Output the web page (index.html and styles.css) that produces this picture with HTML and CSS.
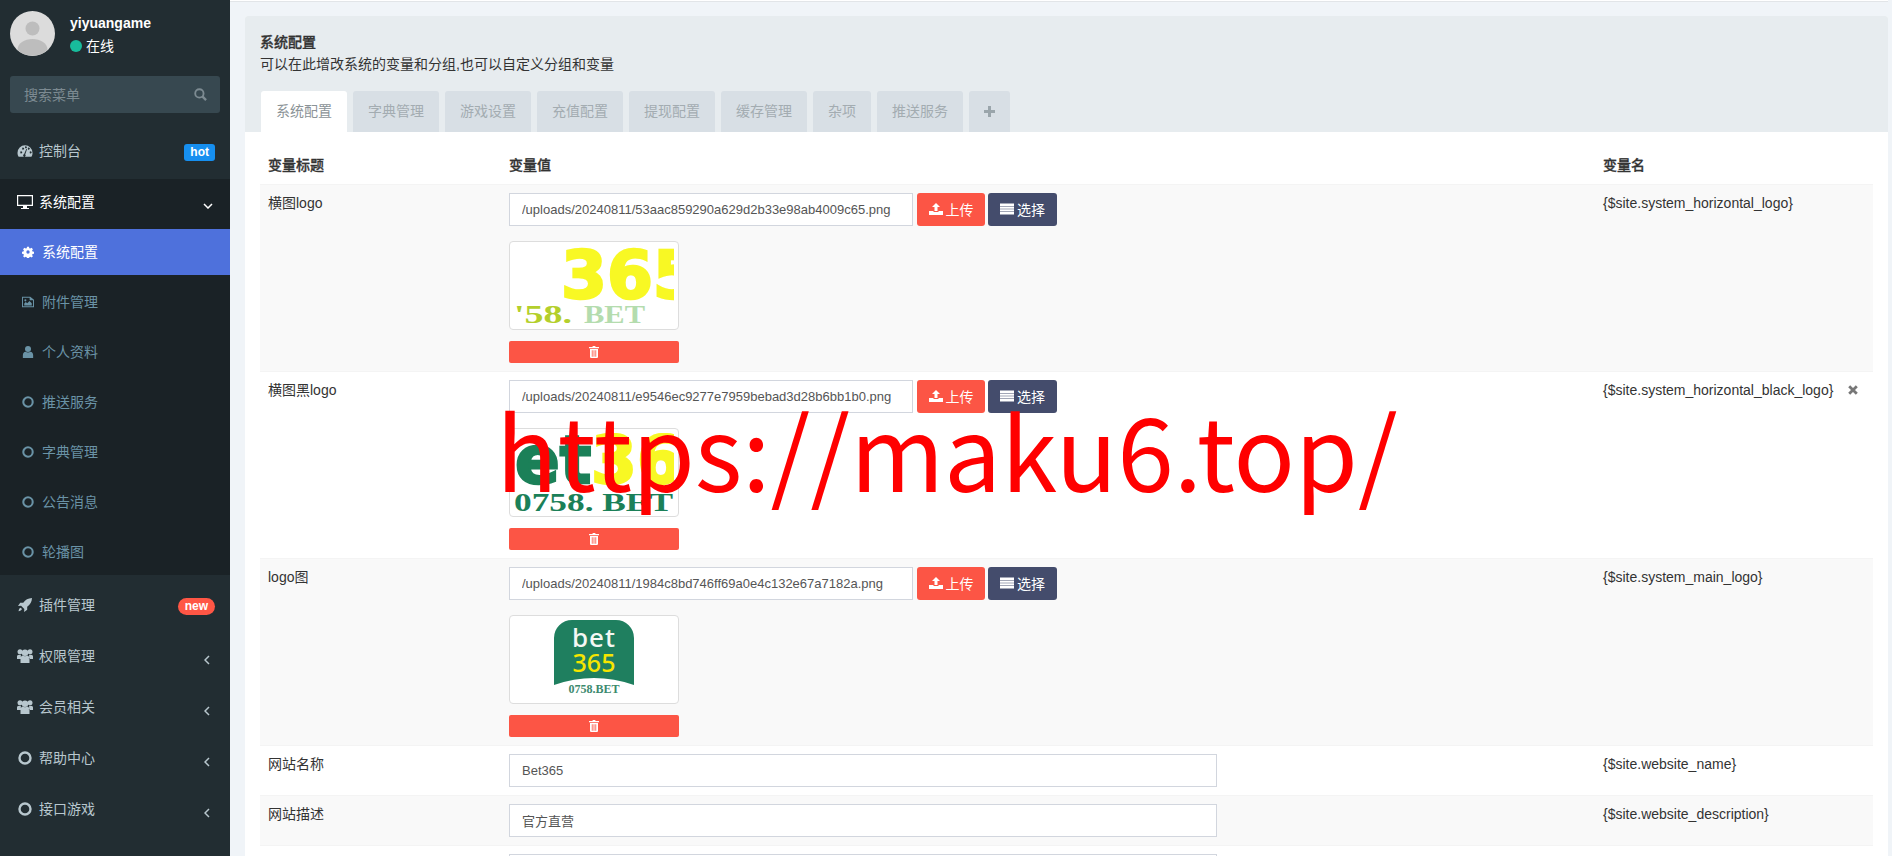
FILE: index.html
```html
<!DOCTYPE html>
<html lang="en">
<head>
    <meta charset="UTF-8">
    <meta name="viewport" content="width=device-width, initial-scale=1.0">
    <title>系统配置</title>
    <link rel="stylesheet" href="styles.css">
</head>
<body>
    <svg class="sprite" xmlns="http://www.w3.org/2000/svg">
        <symbol id="i-gauge" viewBox="-0.500 1.500 17 13"><path fill-rule="evenodd" d="M8 2a8 8 0 0 0-8 8c0 1.6.4 3 1.200 4h13.600c.8-1 1.200-2.400 1.200-4a8 8 0 0 0-8-8zM3 9.500a1 1 0 1 1 0 .01zM5 5.500a1 1 0 1 1 0 .01zM8 4a1 1 0 1 1 0 .01zM13 9.500a1 1 0 1 1 0 .01zM11 5.500a1 1 0 1 1 0 .01zM7 11.500l2.500-6 .7.3-2 6a1.300 1.300 0 1 1-1.200-.3z"/></symbol>
        <symbol id="i-desktop" viewBox="0 0 16 14"><path fill-rule="evenodd" d="M0 0h16v11H10v2h2v1H4v-1h2v-2H0zM1.200 1.200v8.600h13.600V1.200z"/></symbol>
        <symbol id="i-cog" viewBox="-1 0 18 16"><path fill-rule="evenodd" d="M6.500 0h3l.4 2.200 1.500.7L13.300 1.600l2.100 2.100-1.300 1.900.7 1.500 2.200.4v3l-2.200.4-.7 1.500 1.300 1.900-2.100 2.100-1.900-1.300-1.500.7-.4 2.200h-3l-.4-2.200-1.500-.7-1.900 1.300L.6 14.300l1.300-1.900-.7-1.500L-1 10.500v-3l2.200-.4.7-1.500L.6 3.700l2.100-2.100 1.900 1.300 1.500-.7zM8 5.500a2.500 2.500 0 1 0 0 5 2.500 2.500 0 0 0 0-5z"/></symbol>
        <symbol id="i-image" viewBox="0 0 16 14"><path fill-rule="evenodd" d="M0 0h11l5 4v10H0zM1.300 1.300v11.400h13.400V4.800H10.200V1.300z"/><path d="M3 11.500V9l2-2 2 1.800L10 5.800l3 3v2.700z"/><circle cx="4.500" cy="4.800" r="1.400"/></symbol>
        <symbol id="i-user" viewBox="0 0 12 14"><circle cx="6" cy="3.600" r="3.500"/><path d="M0 14v-3.500C0 8.500 1.500 7 3 6.800c1.800 1.200 4.200 1.200 6 0 1.500.2 3 1.700 3 3.700V14z"/></symbol>
        <symbol id="i-circle" viewBox="0 0 14 14"><circle cx="7" cy="7" r="5.500" fill="none" stroke="currentColor" stroke-width="2.400"/></symbol>
        <symbol id="i-rocket" viewBox="0 0 16 16"><path d="M16 0c-4.500.2-7.500 2-10 5.500H2.500L0 9l3.500-.2L7.200 12.500 7 16l3.500-2.500v-3.500C14 7.500 15.800 4.500 16 0z"/><path d="M3 11c-1.500.5-2.200 2.300-2.400 4 1.700-.2 3.500-.9 4-2.400z"/></symbol>
        <symbol id="i-users" viewBox="0 0 16 14"><circle cx="3" cy="2.800" r="2.500"/><circle cx="13" cy="2.800" r="2.500"/><circle cx="8" cy="3.800" r="3.200"/><path d="M0 10V7.500c0-1 .8-1.800 2-1.800h2c-.3.800-.2 3 .2 4.300zM16 10V7.500c0-1-.8-1.800-2-1.800h-2c.3.800.2 3-.2 4.300zM3.500 14v-3.800c0-2.400 1-3.700 2.500-3.700 1.200 1 2.800 1 4 0 1.500 0 2.500 1.300 2.500 3.700V14z"/></symbol>
        <symbol id="i-left" viewBox="0 0 6 10"><path d="M5 1L1 5l4 4" fill="none" stroke="currentColor" stroke-width="1.500"/></symbol>
        <symbol id="i-down" viewBox="0 0 10 6"><path d="M1 1l4 4 4-4" fill="none" stroke="currentColor" stroke-width="1.500"/></symbol>
        <symbol id="i-search" viewBox="0 0 14 14"><circle cx="5.800" cy="5.800" r="4.500" fill="none" stroke="currentColor" stroke-width="2"/><path d="M9 9l4 4" stroke="currentColor" stroke-width="2.500"/></symbol>
        <symbol id="i-upload" viewBox="0 0 14 12"><path d="M7 0l4 4H8.500v4h-3V4H3z"/><path d="M0 8h4.500v1h5V8H14v4H0z"/></symbol>
        <symbol id="i-list" viewBox="0 0 14 11"><path d="M0 0h14v2.400H0zM0 2.900h14v2.300H0zM0 5.700h14v2.300H0zM0 8.500h14V11H0z"/></symbol>
        <symbol id="i-trash" viewBox="0 0 10 12"><path fill-rule="evenodd" d="M3.200 1L4 0h2l.8 1H10v1.300H0V1zM1 3h8v8.200L8.200 12H1.800L1 11.200zM2.800 4.200v6.500h.8V4.200zM4.600 4.200v6.500h.8V4.200zM6.400 4.200v6.500h.8V4.200z"/></symbol>
        <symbol id="i-times" viewBox="0 0 10 10"><path d="M1.200 1.200l7.600 7.600M8.800 1.200L1.200 8.800" stroke="currentColor" stroke-width="2.800"/></symbol>
        <symbol id="i-plus" viewBox="0 0 11 11"><path d="M4 0h3v4h4v3H7v4H4V7H0V4h4z"/></symbol>
    </svg>

    <aside class="sidebar">
        <div class="user-panel">
            <svg class="avatar" viewBox="0 0 45 45">
                <circle cx="22.500" cy="22.500" r="22.500" fill="#dcdcdc"/>
                <circle cx="22.500" cy="17.500" r="7" fill="#bdbdbd"/>
                <path d="M7.500 39c0-7 7-11 15-11s15 4 15 11a22.500 22.500 0 0 1-30 0z" fill="#bdbdbd"/>
            </svg>
            <div class="user-info">
                <div class="user-name">yiyuangame</div>
                <div class="user-status"><span class="dot"></span>在线</div>
            </div>
        </div>
        <div class="sidebar-search">
            <span>搜索菜单</span>
            <svg class="icon search-icon"><use href="#i-search"/></svg>
        </div>
        <ul class="menu">
            <li class="menu-item">
                <svg class="icon menu-icon"><use href="#i-gauge"/></svg><span class="menu-label">控制台</span>
                <span class="badge badge-hot">hot</span>
            </li>
            <li class="menu-group">
                <div class="menu-item open">
                    <svg class="icon menu-icon"><use href="#i-desktop"/></svg><span class="menu-label">系统配置</span>
                    <svg class="icon caret-down"><use href="#i-down"/></svg>
                </div>
                <ul class="submenu">
                    <li class="sub-item active"><svg class="icon sub-icon"><use href="#i-cog"/></svg>系统配置</li>
                    <li class="sub-item"><svg class="icon sub-icon"><use href="#i-image"/></svg>附件管理</li>
                    <li class="sub-item"><svg class="icon sub-icon"><use href="#i-user"/></svg>个人资料</li>
                    <li class="sub-item"><svg class="icon sub-icon"><use href="#i-circle"/></svg>推送服务</li>
                    <li class="sub-item"><svg class="icon sub-icon"><use href="#i-circle"/></svg>字典管理</li>
                    <li class="sub-item"><svg class="icon sub-icon"><use href="#i-circle"/></svg>公告消息</li>
                    <li class="sub-item"><svg class="icon sub-icon"><use href="#i-circle"/></svg>轮播图</li>
                </ul>
            </li>
            <li class="menu-item">
                <svg class="icon menu-icon"><use href="#i-rocket"/></svg><span class="menu-label">插件管理</span>
                <span class="badge badge-new">new</span>
            </li>
            <li class="menu-item">
                <svg class="icon menu-icon"><use href="#i-users"/></svg><span class="menu-label">权限管理</span>
                <svg class="icon caret-left"><use href="#i-left"/></svg>
            </li>
            <li class="menu-item">
                <svg class="icon menu-icon"><use href="#i-users"/></svg><span class="menu-label">会员相关</span>
                <svg class="icon caret-left"><use href="#i-left"/></svg>
            </li>
            <li class="menu-item">
                <svg class="icon menu-icon"><use href="#i-circle"/></svg><span class="menu-label">帮助中心</span>
                <svg class="icon caret-left"><use href="#i-left"/></svg>
            </li>
            <li class="menu-item">
                <svg class="icon menu-icon"><use href="#i-circle"/></svg><span class="menu-label">接口游戏</span>
                <svg class="icon caret-left"><use href="#i-left"/></svg>
            </li>
        </ul>
    </aside>

    <main class="content">
        <div class="topline"></div>
        <section class="panel">
            <div class="panel-heading">
                <div class="panel-title">系统配置</div>
                <div class="panel-desc">可以在此增改系统的变量和分组,也可以自定义分组和变量</div>
                <div class="tabs">
                    <a class="tab active">系统配置</a>
                    <a class="tab">字典管理</a>
                    <a class="tab">游戏设置</a>
                    <a class="tab">充值配置</a>
                    <a class="tab">提现配置</a>
                    <a class="tab">缓存管理</a>
                    <a class="tab">杂项</a>
                    <a class="tab">推送服务</a>
                    <a class="tab tab-add"><svg class="icon plus-icon"><use href="#i-plus"/></svg></a>
                </div>
            </div>
            <div class="panel-body">
                <table>
                    <thead>
                        <tr>
                            <th class="col-title">变量标题</th>
                            <th class="col-value">变量值</th>
                            <th>变量名</th>
                        </tr>
                    </thead>
                    <tbody>
                        <tr>
                            <td>横图logo</td>
                            <td>
                                <div class="upload-row">
                                    <input class="form-input" value="/uploads/20240811/53aac859290a629d2b33e98ab4009c65.png">
                                    <button class="btn btn-red"><svg class="icon btn-icon"><use href="#i-upload"/></svg>上传</button>
                                    <button class="btn btn-navy"><svg class="icon btn-icon"><use href="#i-list"/></svg>选择</button>
                                </div>
                                <div class="thumb">
                                    <svg class="thumb-img" viewBox="0 0 160 79">
                                        <text class="logo-big" x="47" y="52" fill="#f8f824" stroke="#f8f824">365</text>
                                        <text class="logo-serif" x="0" y="77" fill="#b4cf2c" textLength="58" lengthAdjust="spacingAndGlyphs">'58.</text>
                                        <text class="logo-serif" x="70" y="77" fill="#b4dcae" textLength="61" lengthAdjust="spacingAndGlyphs">BET</text>
                                    </svg>
                                </div>
                                <button class="btn-delete"><svg class="icon trash-icon"><use href="#i-trash"/></svg></button>
                            </td>
                            <td>{$site.system_horizontal_logo}</td>
                        </tr>
                        <tr>
                            <td>横图黑logo</td>
                            <td>
                                <div class="upload-row">
                                    <input class="form-input" value="/uploads/20240811/e9546ec9277e7959bebad3d28b6bb1b0.png">
                                    <button class="btn btn-red"><svg class="icon btn-icon"><use href="#i-upload"/></svg>上传</button>
                                    <button class="btn btn-navy"><svg class="icon btn-icon"><use href="#i-list"/></svg>选择</button>
                                </div>
                                <div class="thumb">
                                    <svg class="thumb-img" viewBox="0 0 160 79">
                                        <text class="logo-big" x="1" y="50" fill="#1b8058" stroke="#1b8058">et</text>
                                        <text class="logo-big" x="77" y="50" fill="#f8f824" stroke="#f8f824">36</text>
                                        <text class="logo-serif" x="0" y="78" fill="#1b8058" textLength="159" lengthAdjust="spacingAndGlyphs">0758. BET</text>
                                    </svg>
                                </div>
                                <button class="btn-delete"><svg class="icon trash-icon"><use href="#i-trash"/></svg></button>
                            </td>
                            <td>
                                <div class="var-row">
                                    <span>{$site.system_horizontal_black_logo}</span>
                                    <svg class="icon times-icon"><use href="#i-times"/></svg>
                                </div>
                            </td>
                        </tr>
                        <tr>
                            <td>logo图</td>
                            <td>
                                <div class="upload-row">
                                    <input class="form-input" value="/uploads/20240811/1984c8bd746ff69a0e4c132e67a7182a.png">
                                    <button class="btn btn-red"><svg class="icon btn-icon"><use href="#i-upload"/></svg>上传</button>
                                    <button class="btn btn-navy"><svg class="icon btn-icon"><use href="#i-list"/></svg>选择</button>
                                </div>
                                <div class="thumb">
                                    <svg class="thumb-img" viewBox="0 0 160 79">
                                        <path d="M58 0h44a18 18 0 0 1 18 18v47Q80 51 40 65V18a18 18 0 0 1 18-18z" fill="#1f7f5f"/>
                                        <text class="logo-bet" x="80" y="27" fill="#f4f8f4">bet</text>
                                        <text class="logo-num" x="80" y="52" fill="#f6e500">365</text>
                                        <text class="logo-small" x="80" y="73" fill="#3d8a6e">0758.BET</text>
                                    </svg>
                                </div>
                                <button class="btn-delete"><svg class="icon trash-icon"><use href="#i-trash"/></svg></button>
                            </td>
                            <td>{$site.system_main_logo}</td>
                        </tr>
                        <tr>
                            <td>网站名称</td>
                            <td><input class="form-input wide" value="Bet365"></td>
                            <td>{$site.website_name}</td>
                        </tr>
                        <tr>
                            <td>网站描述</td>
                            <td><input class="form-input wide" value="官方直营"></td>
                            <td>{$site.website_description}</td>
                        </tr>
                        <tr>
                            <td></td>
                            <td><input class="form-input wide"></td>
                            <td></td>
                        </tr>
                    </tbody>
                </table>
            </div>
        </section>
    </main>

    <div class="watermark">https://maku6.top/</div>
</body>
</html>
```

FILE: styles.css
```css
* {
    box-sizing: border-box;
}

html {
    height: 856px;
    overflow: hidden;
}

body {
    font-family: "Liberation Sans", "Noto Sans CJK SC", sans-serif;
    font-size: 14px;
    line-height: 20px;
    color: #333;
    background-color: #f0f4f8;
    margin: 0;
    height: 856px;
    overflow: hidden;
    display: flex;
}

ul {
    list-style: none;
    margin: 0;
    padding: 0;
}

.sprite {
    display: none;
}

.icon {
    display: block;
    fill: currentColor;
    flex: none;
}

/* sidebar */
.sidebar {
    width: 230px;
    flex: none;
    background-color: #222d32;
    color: #b8c7ce;
}

.user-panel {
    display: flex;
    padding: 11px 10px 0;
    height: 76px;
}

.avatar {
    width: 45px;
    height: 45px;
}

.user-info {
    margin-left: 15px;
    color: #fff;
}

.user-name {
    font-weight: bold;
    margin-top: 2px;
}

.user-status {
    display: flex;
    align-items: center;
    margin-top: 3px;
}

.dot {
    width: 12px;
    height: 12px;
    border-radius: 50%;
    background-color: #18bc9c;
    margin-right: 4px;
}

.sidebar-search {
    display: flex;
    align-items: center;
    justify-content: space-between;
    height: 37px;
    margin: 0 10px 12px;
    padding: 0 14px;
    background-color: #374850;
    border-radius: 3px;
    color: #7d8b92;
}

.search-icon {
    width: 13px;
    height: 13px;
    margin-right: -1px;
}

.menu-item {
    display: flex;
    align-items: center;
    height: 51px;
    padding: 0 15px 0 17px;
}

.menu-item.open {
    height: 50px;
    margin-top: 3px;
    padding-bottom: 4px;
    color: #fff;
    background-color: #1a2226;
}

.menu-group {
    margin-bottom: 4px;
}

.menu-icon {
    width: 16px;
    height: 14px;
    margin-right: 6px;
}

.menu-label {
    flex: 1;
}

.badge {
    color: #fff;
    font-size: 12px;
    font-weight: bold;
    line-height: 17px;
    margin-top: 3px;
}

.badge-hot {
    background-color: #168ff0;
    border-radius: 3px;
    padding: 0 6px;
}

.badge-new {
    background-color: #ff5645;
    border-radius: 9px;
    padding: 0 7px;
}

.caret-left {
    width: 6px;
    height: 10px;
    margin: 8px 5px 0 0;
}

.caret-down {
    width: 10px;
    height: 6px;
    margin: 8px 2px 0 0;
}

.submenu {
    background-color: #1a2226;
}

.sub-item {
    display: flex;
    align-items: center;
    height: 46px;
    margin-bottom: 4px;
    padding-left: 22px;
    color: #6a93a6;
}

.sub-item.active {
    color: #fff;
    background-color: #4e71dc;
}

.sub-icon {
    width: 12px;
    height: 12px;
    margin-right: 8px;
}

/* content */
.content {
    flex: 1;
    min-width: 0;
    height: 856px;
    overflow: hidden;
    padding-right: 4px;
}

.topline {
    height: 2px;
    margin-bottom: 14px;
    background-color: #fff;
    border-bottom: 1px solid #e2e5e8;
}

.panel {
    margin-left: 15px;
    background-color: #fff;
    border-radius: 3px;
}

.panel-heading {
    background-color: #e7ecef;
    padding: 16px 15px 0;
    border-radius: 3px 3px 0 0;
}

.panel-title {
    font-weight: 500;
    line-height: 20px;
    -webkit-text-stroke: 0.3px #333;
}

.panel-desc {
    margin-top: 2px;
}

.tabs {
    display: flex;
    gap: 6px;
    margin: 17px 0 0 1px;
}

.tab {
    height: 41px;
    line-height: 41px;
    padding: 0 15px;
    background-color: #d8dfe5;
    color: #a3acb1;
    border-radius: 3px 3px 0 0;
}

.tab.active {
    background-color: #fff;
    color: #8b9397;
}

.tab-add {
    display: flex;
    align-items: center;
    color: #9aa5ab;
}

.plus-icon {
    width: 11px;
    height: 11px;
}

.panel-body {
    padding: 15px;
}

table {
    width: 100%;
    border-collapse: separate;
    border-spacing: 0;
    table-layout: fixed;
}

th, td {
    padding: 8px;
    text-align: left;
    vertical-align: top;
}

th {
    padding-bottom: 9px;
    font-weight: 500;
    -webkit-text-stroke: 0.3px #333;
}

.col-title {
    width: 241px;
}

.col-value {
    width: 1094px;
}

td {
    border-top: 1px solid #f4f4f4;
}

tbody tr:nth-child(odd) {
    background-color: #f9f9f9;
}

.upload-row {
    display: flex;
}

.form-input {
    display: block;
    width: 404px;
    height: 33px;
    padding: 0 12px;
    font: 13px "Liberation Sans", "Noto Sans CJK SC", sans-serif;
    color: #555;
    background-color: #fff;
    border: 1px solid #d2d6de;
    outline: none;
}

.form-input.wide {
    width: 708px;
}

.btn {
    display: flex;
    align-items: center;
    justify-content: center;
    height: 33px;
    padding: 0 0 2px;
    border: none;
    border-radius: 3px;
    color: #fff;
    font: 14px "Liberation Sans", "Noto Sans CJK SC", sans-serif;
}

.btn-red {
    width: 68px;
    margin-left: 4px;
    background-color: #fc5545;
}

.btn-navy {
    width: 69px;
    margin-left: 3px;
    background-color: #444c6c;
}

.btn-icon {
    width: 14px;
    height: 12px;
    margin-right: 3px;
}

.thumb {
    width: 170px;
    height: 89px;
    margin-top: 15px;
    padding: 4px;
    background-color: #fff;
    border: 1px solid #ddd;
    border-radius: 4px;
}

.thumb-img {
    display: block;
    width: 160px;
    height: 79px;
    overflow: hidden;
}

.logo-big {
    font-family: "DejaVu Sans", sans-serif;
    font-weight: bold;
    font-size: 66px;
    stroke-width: 2.500px;
}

.logo-serif {
    font-family: "Liberation Serif", serif;
    font-weight: bold;
    font-size: 26px;
}

.logo-bet {
    font-family: "Noto Sans", sans-serif;
    font-weight: 500;
    font-size: 26px;
    letter-spacing: 1px;
    text-anchor: middle;
}

.logo-num {
    font-family: "Noto Sans", sans-serif;
    font-weight: 500;
    font-size: 25px;
    text-anchor: middle;
}

.logo-small {
    font-family: "Liberation Serif", serif;
    font-weight: bold;
    font-size: 12px;
    text-anchor: middle;
}

.btn-delete {
    display: flex;
    align-items: center;
    justify-content: center;
    width: 170px;
    height: 22px;
    margin-top: 11px;
    padding: 0;
    border: none;
    border-radius: 2px;
    color: #fff;
    background-color: #fc5545;
}

.trash-icon {
    width: 10px;
    height: 12px;
}

.var-row {
    display: flex;
    align-items: center;
    justify-content: space-between;
    padding-right: 7px;
}

.times-icon {
    width: 10px;
    height: 10px;
    color: #777;
}

/* sits over the whole page */
.watermark {
    position: absolute;
    left: 496px;
    top: 378px;
    font-family: "Noto Sans CJK SC", sans-serif;
    font-size: 101.500px;
    line-height: 140px;
    color: #f00;
    white-space: nowrap;
}
```
